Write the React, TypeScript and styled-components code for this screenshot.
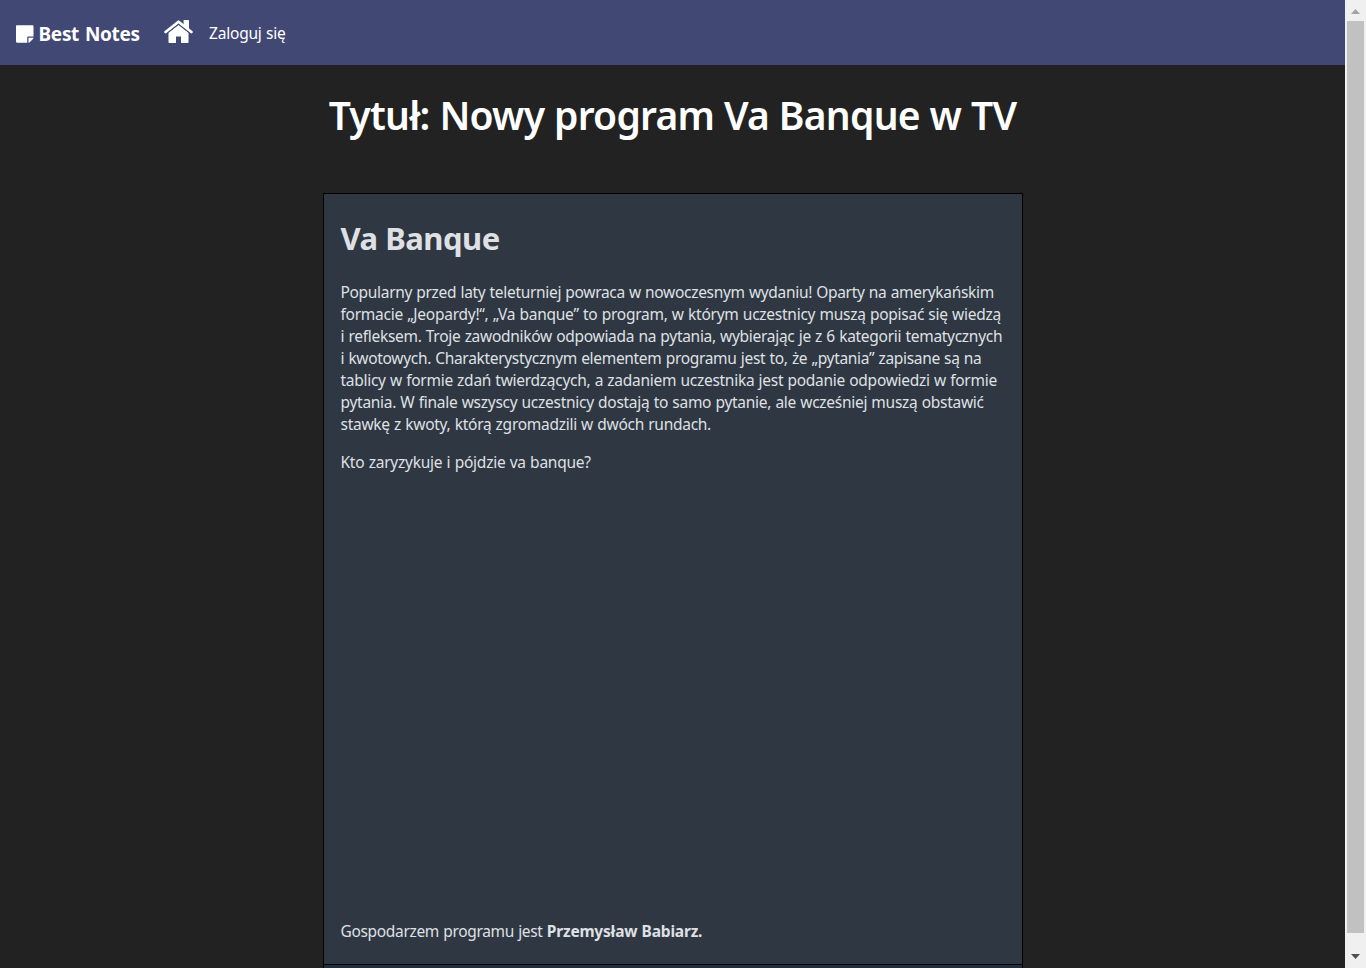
import React from "react";
import styled, { createGlobalStyle } from "styled-components";
import { FaStickyNote } from "react-icons/fa";

const GlobalStyle = createGlobalStyle`
  *, *::before, *::after { box-sizing: border-box; }
  html, body { margin: 0; overflow: hidden; }
  body {
    background: #222222;
    color: #ffffff;
    font-family: "Noto Sans", "Open Sans", sans-serif;
    font-size: 15.5px;
  }
`;

const Shell = styled.div`
  display: flex;
  height: 968px;
  overflow: hidden;
`;

const Page = styled.div`
  flex: 1;
  display: flex;
  flex-direction: column;
  align-items: center;
  min-width: 0;
`;

const Navbar = styled.nav`
  flex: none;
  display: flex;
  align-items: center;
  align-self: stretch;
  height: 65px;
  padding: 0 16px;
  background: #424874;
`;

const Brand = styled.a`
  display: flex;
  align-items: center;
  gap: 5px;
  width: 148px;
  padding-top: 2px;
  white-space: nowrap;
  font-size: 19px;
  font-weight: 700;
  letter-spacing: -0.3px;
  word-spacing: 1.2px;
  svg { font-size: 20px; width: 17.5px; }
`;

const HomeLink = styled.a`
  display: flex;
  width: 45px;
  padding-bottom: 2px;
`;

const HomeIcon = styled.svg`
  display: block;
  width: 29px;
  height: 24px;
`;

const NavLink = styled.a`
  white-space: nowrap;
  line-height: 22px;
  letter-spacing: -0.2px;
  word-spacing: 0.5px;
`;

const Title = styled.h1`
  flex: none;
  margin: 26px 0 54px;
  height: 48px;
  line-height: 48px;
  white-space: nowrap;
  font-size: 39px;
  font-weight: 600;
  letter-spacing: -0.76px;
  word-spacing: 0.4px;
`;

const Editor = styled.main`
  flex: none;
  width: 700px;
  height: 900px;
  border: 1px solid #000000;
  background: #222f3e;
`;

const Article = styled.article`
  display: flex;
  flex-direction: column;
  height: 771px;
  padding: 22px 17px 0;
  background: #2f3742;
  border-bottom: 1px solid #000000;
  color: #dfe0e4;
`;

const Heading = styled.h2`
  margin: 0 0 20px;
  height: 45px;
  line-height: 45px;
  font-size: 31px;
  font-weight: 700;
  letter-spacing: -0.5px;
`;

const Paragraph = styled.p`
  margin: 0 0 16px;
  line-height: 22px;
`;

const Line = styled.span<{ $track: number }>`
  display: block;
  white-space: nowrap;
  letter-spacing: ${(p) => p.$track}px;
  word-spacing: 0.5px;
`;

const Strong = styled.b`
  letter-spacing: -0.2px;
`;

const EmbedSpace = styled.div`
  height: 431px;
`;

const Scrollbar = styled.aside`
  display: flex;
  flex-direction: column;
  align-items: center;
  width: 21px;
  padding: 9px 2px 8px;
  background: #f0f0f0;
`;

const Arrow = styled.svg`
  flex: none;
  display: block;
  width: 9px;
  height: 5px;
`;

const Thumb = styled.div`
  align-self: stretch;
  height: 912px;
  margin: 7px 0 21px;
  background: #c1c1c1;
`;

const intro: [string, number][] = [
  ["Popularny przed laty teleturniej powraca w nowoczesnym wydaniu! Oparty na amerykańskim", -0.316],
  ["formacie „Jeopardy!“, „Va banque” to program, w którym uczestnicy muszą popisać się wiedzą", -0.26],
  ["i refleksem. Troje zawodników odpowiada na pytania, wybierając je z 6 kategorii tematycznych", -0.29],
  ["i kwotowych. Charakterystycznym elementem programu jest to, że „pytania” zapisane są na", -0.315],
  ["tablicy w formie zdań twierdzących, a zadaniem uczestnika jest podanie odpowiedzi w formie", -0.275],
  ["pytania. W finale wszyscy uczestnicy dostają to samo pytanie, ale wcześniej muszą obstawić", -0.278],
  ["stawkę z kwoty, którą zgromadzili w dwóch rundach.", -0.278],
];

export default function App() {
  return (
    <>
      <GlobalStyle />
      <Shell>
        <Page>
          <Navbar>
            <Brand><FaStickyNote /><span>Best Notes</span></Brand>
            <HomeLink aria-label="Home">
              <HomeIcon viewBox="0 0 29 24" fill="#ffffff">
                <path d="M19.6 0.6Q19.6 0 20.2 0H24.4Q25 0 25 0.6V9L19.6 5Z" />
                <path d="M1.6 12L14.5 1.8L27.4 12" fill="none" stroke="#ffffff" strokeWidth="2.8" strokeLinecap="round" strokeLinejoin="round" />
                <path d="M4.5 12.8L14.5 4.9L24.5 12.8V22.2Q24.5 23 23.7 23H17V16.4H12V23H5.3Q4.5 23 4.5 22.2Z" />
                <path d="M3.4 13L14.5 4.2L25.6 13" fill="none" stroke="#424874" strokeWidth="0.9" />
              </HomeIcon>
            </HomeLink>
            <NavLink>Zaloguj się</NavLink>
          </Navbar>
          <Title>Tytuł: Nowy program Va Banque w TV</Title>
          <Editor>
            <Article>
              <Heading>Va Banque</Heading>
              <Paragraph>
                {intro.map(([text, track]) => (
                  <Line key={text} $track={track}>{text}</Line>
                ))}
              </Paragraph>
              <Paragraph><Line $track={-0.24}>Kto zaryzykuje i pójdzie va banque?</Line></Paragraph>
              <EmbedSpace />
              <Paragraph><Line $track={-0.33}>Gospodarzem programu jest <Strong>Przemysław Babiarz.</Strong></Line></Paragraph>
            </Article>
          </Editor>
        </Page>
        <Scrollbar>
          <Arrow viewBox="0 0 9 5"><path d="M4.5 0L9 5H0Z" fill="#a3a3a3" /></Arrow>
          <Thumb />
          <Arrow viewBox="0 0 9 5"><path d="M0 0H9L4.5 5Z" fill="#505050" /></Arrow>
        </Scrollbar>
      </Shell>
    </>
  );
}
